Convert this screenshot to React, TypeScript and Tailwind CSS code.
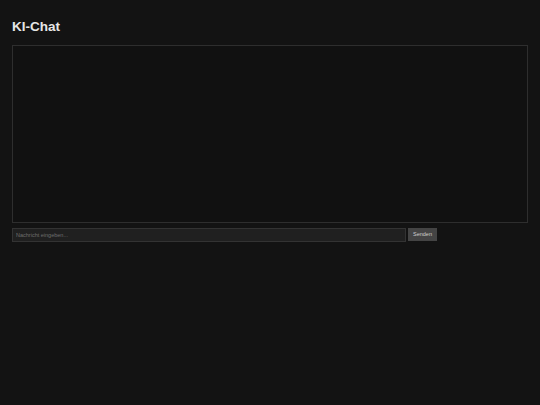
export default function App() {
  return (
    <div className="min-h-[405px] bg-[#131313] px-3 pt-[19px] font-['Liberation_Sans',Arial,sans-serif] text-[#e6e6e6]">
      <h1 className="text-[13.5px] font-bold leading-[16px] mb-[10px]">KI-Chat</h1>

      <div className="h-[178px] w-[516px] border border-[#2e2e2e] bg-[#111111]" />

      <div className="mt-[5px] flex gap-[2px]">
        <input
          placeholder="Nachricht eingeben..."
          className="h-[14px] w-[394px] border border-[#333333] bg-[#202020] px-[3px] text-[5.5px] text-[#cccccc] placeholder:text-[#6f6f6f] outline-none"
        />
        <button className="h-[13px] w-[29px] bg-[#444444] text-[5.5px] text-[#cfcfcf]">
          Senden
        </button>
      </div>
    </div>
  );
}
